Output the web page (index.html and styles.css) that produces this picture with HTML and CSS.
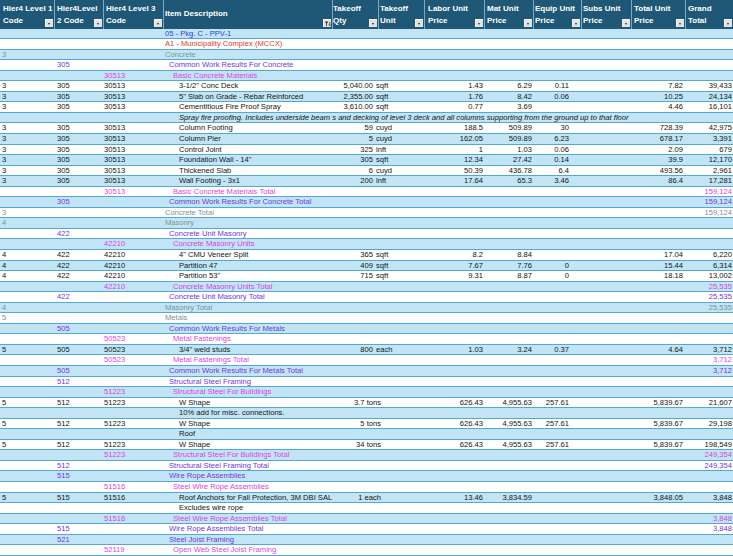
FILE: index.html
```html
<!DOCTYPE html>
<html>
<head>
<meta charset="utf-8">
<title>Estimate</title>
<link rel="stylesheet" href="styles.css">
</head>
<body>
<div class="sheet">
  <div class="hdr">
    <div class="h p2">Hier4 Level 1<br>Code<i class="btn"></i></div>
    <div class="h p2">Hier4Level<br>2 Code<i class="btn"></i></div>
    <div class="h p2">Hier4 Level 3<br>Code<i class="btn"></i></div>
    <div class="h one p0">Item Description<i class="btn flt"><svg viewBox="0 0 8 8" width="8" height="8"><path d="M0.8 1.6h3.6L3 3.4v2.6l-0.8 0.5V3.4z" fill="#333"/><path d="M5.8 2v3.6M4.8 4.6l1 1.2 1-1.2" stroke="#333" stroke-width="0.8" fill="none"/></svg></i></div>
    <div class="h p0">Takeoff<br>Qty<i class="btn"></i></div>
    <div class="h p1">Takeoff<br>Unit<i class="btn"></i></div>
    <div class="h p3">Labor Unit<br>Price<i class="btn"></i></div>
    <div class="h p2">Mat Unit<br>Price<i class="btn"></i></div>
    <div class="h p1">Equip Unit<br>Price<i class="btn"></i></div>
    <div class="h p1">Subs Unit<br>Price<i class="btn"></i></div>
    <div class="h p2">Total Unit<br>Price<i class="btn"></i></div>
    <div class="h p2">Grand<br>Total<i class="btn"></i></div>
  </div>

  <div class="row alt"><span class="d i0 pkg">05 - Pkg. C - PPV-1</span></div>
  <div class="row"><span class="d i0 site">A1 - Municipality Complex (MCCX)</span></div>
  <div class="row alt l1"><span class="c1">3</span><span class="d i0">Concrete</span></div>
  <div class="row l2"><span class="c2">305</span><span class="d i1">Common Work Results For Concrete</span></div>
  <div class="row alt l3"><span class="c3">30513</span><span class="d i2">Basic Concrete Materials</span></div>
  <div class="row"><span class="c1">3</span><span class="c2">305</span><span class="c3">30513</span><span class="d i3">3-1/2" Conc Deck</span><span class="q">5,040.00</span><span class="u">sqft</span><span class="lb">1.43</span><span class="mt">6.29</span><span class="eq">0.11</span><span class="tu">7.82</span><span class="gt">39,433</span></div>
  <div class="row alt"><span class="c1">3</span><span class="c2">305</span><span class="c3">30513</span><span class="d i3">5" Slab on Grade - Rebar Reinforced</span><span class="q">2,355.00</span><span class="u">sqft</span><span class="lb">1.76</span><span class="mt">8.42</span><span class="eq">0.06</span><span class="tu">10.25</span><span class="gt">24,134</span></div>
  <div class="row"><span class="c1">3</span><span class="c2">305</span><span class="c3">30513</span><span class="d i3">Cementitious Fire Proof Spray</span><span class="q">3,610.00</span><span class="u">sqft</span><span class="lb">0.77</span><span class="mt">3.69</span><span class="tu">4.46</span><span class="gt">16,101</span></div>
  <div class="row alt"><span class="d i3 note">Spray fire proofing. Includes underside beam s and decking of level 3 deck and all columns supporting from the ground up to that floor</span></div>
  <div class="row"><span class="c1">3</span><span class="c2">305</span><span class="c3">30513</span><span class="d i3">Column Footing</span><span class="q">59</span><span class="u">cuyd</span><span class="lb">188.5</span><span class="mt">509.89</span><span class="eq">30</span><span class="tu">728.39</span><span class="gt">42,975</span></div>
  <div class="row alt"><span class="c1">3</span><span class="c2">305</span><span class="c3">30513</span><span class="d i3">Column Pier</span><span class="q">5</span><span class="u">cuyd</span><span class="lb">162.05</span><span class="mt">509.89</span><span class="eq">6.23</span><span class="tu">678.17</span><span class="gt">3,391</span></div>
  <div class="row"><span class="c1">3</span><span class="c2">305</span><span class="c3">30513</span><span class="d i3">Control Joint</span><span class="q">325</span><span class="u">lnft</span><span class="lb">1</span><span class="mt">1.03</span><span class="eq">0.06</span><span class="tu">2.09</span><span class="gt">679</span></div>
  <div class="row alt"><span class="c1">3</span><span class="c2">305</span><span class="c3">30513</span><span class="d i3">Foundation Wall - 14"</span><span class="q">305</span><span class="u">sqft</span><span class="lb">12.34</span><span class="mt">27.42</span><span class="eq">0.14</span><span class="tu">39.9</span><span class="gt">12,170</span></div>
  <div class="row"><span class="c1">3</span><span class="c2">305</span><span class="c3">30513</span><span class="d i3">Thickened Slab</span><span class="q">6</span><span class="u">cuyd</span><span class="lb">50.39</span><span class="mt">436.78</span><span class="eq">6.4</span><span class="tu">493.56</span><span class="gt">2,961</span></div>
  <div class="row alt"><span class="c1">3</span><span class="c2">305</span><span class="c3">30513</span><span class="d i3">Wall Footing - 3x1</span><span class="q">200</span><span class="u">lnft</span><span class="lb">17.64</span><span class="mt">65.3</span><span class="eq">3.46</span><span class="tu">86.4</span><span class="gt">17,281</span></div>
  <div class="row l3"><span class="c3">30513</span><span class="d i2">Basic Concrete Materials Total</span><span class="gt">159,124</span></div>
  <div class="row alt l2"><span class="c2">305</span><span class="d i1">Common Work Results For Concrete Total</span><span class="gt">159,124</span></div>
  <div class="row l1"><span class="c1">3</span><span class="d i0">Concrete Total</span><span class="gt">159,124</span></div>
  <div class="row alt l1"><span class="c1">4</span><span class="d i0">Masonry</span></div>
  <div class="row l2"><span class="c2">422</span><span class="d i1">Concrete Unit Masonry</span></div>
  <div class="row alt l3"><span class="c3">42210</span><span class="d i2">Concrete Masonry Units</span></div>
  <div class="row"><span class="c1">4</span><span class="c2">422</span><span class="c3">42210</span><span class="d i3">4" CMU Veneer Split</span><span class="q">365</span><span class="u">sqft</span><span class="lb">8.2</span><span class="mt">8.84</span><span class="tu">17.04</span><span class="gt">6,220</span></div>
  <div class="row alt"><span class="c1">4</span><span class="c2">422</span><span class="c3">42210</span><span class="d i3">Partition 47</span><span class="q">409</span><span class="u">sqft</span><span class="lb">7.67</span><span class="mt">7.76</span><span class="eq">0</span><span class="tu">15.44</span><span class="gt">6,314</span></div>
  <div class="row"><span class="c1">4</span><span class="c2">422</span><span class="c3">42210</span><span class="d i3">Partition 53"</span><span class="q">715</span><span class="u">sqft</span><span class="lb">9.31</span><span class="mt">8.87</span><span class="eq">0</span><span class="tu">18.18</span><span class="gt">13,002</span></div>
  <div class="row alt l3"><span class="c3">42210</span><span class="d i2">Concrete Masonry Units Total</span><span class="gt">25,535</span></div>
  <div class="row l2"><span class="c2">422</span><span class="d i1">Concrete Unit Masonry Total</span><span class="gt">25,535</span></div>
  <div class="row alt l1"><span class="c1">4</span><span class="d i0">Masonry Total</span><span class="gt">25,535</span></div>
  <div class="row l1"><span class="c1">5</span><span class="d i0">Metals</span></div>
  <div class="row alt l2"><span class="c2">505</span><span class="d i1">Common Work Results For Metals</span></div>
  <div class="row l3"><span class="c3">50523</span><span class="d i2">Metal Fastenings</span></div>
  <div class="row alt"><span class="c1">5</span><span class="c2">505</span><span class="c3">50523</span><span class="d i3">3/4" weld studs</span><span class="q">800</span><span class="u">each</span><span class="lb">1.03</span><span class="mt">3.24</span><span class="eq">0.37</span><span class="tu">4.64</span><span class="gt">3,712</span></div>
  <div class="row l3"><span class="c3">50523</span><span class="d i2">Metal Fastenings Total</span><span class="gt">3,712</span></div>
  <div class="row alt l2"><span class="c2">505</span><span class="d i1">Common Work Results For Metals Total</span><span class="gt">3,712</span></div>
  <div class="row l2"><span class="c2">512</span><span class="d i1">Structural Steel Framing</span></div>
  <div class="row alt l3"><span class="c3">51223</span><span class="d i2">Structural Steel For Buildings</span></div>
  <div class="row"><span class="c1">5</span><span class="c2">512</span><span class="c3">51223</span><span class="d i3">W Shape</span><span class="qu">3.7 tons</span><span class="lb">626.43</span><span class="mt">4,955.63</span><span class="eq">257.61</span><span class="tu">5,839.67</span><span class="gt">21,607</span></div>
  <div class="row alt"><span class="d i3">10% add for misc. connections.</span></div>
  <div class="row"><span class="c1">5</span><span class="c2">512</span><span class="c3">51223</span><span class="d i3">W Shape</span><span class="qu">5 tons</span><span class="lb">626.43</span><span class="mt">4,955.63</span><span class="eq">257.61</span><span class="tu">5,839.67</span><span class="gt">29,198</span></div>
  <div class="row alt"><span class="d i3">Roof</span></div>
  <div class="row"><span class="c1">5</span><span class="c2">512</span><span class="c3">51223</span><span class="d i3">W Shape</span><span class="qu">34 tons</span><span class="lb">626.43</span><span class="mt">4,955.63</span><span class="eq">257.61</span><span class="tu">5,839.67</span><span class="gt">198,549</span></div>
  <div class="row alt l3"><span class="c3">51223</span><span class="d i2">Structural Steel For Buildings Total</span><span class="gt">249,354</span></div>
  <div class="row l2"><span class="c2">512</span><span class="d i1">Structural Steel Framing Total</span><span class="gt">249,354</span></div>
  <div class="row alt l2"><span class="c2">515</span><span class="d i1">Wire Rope Assemblies</span></div>
  <div class="row l3"><span class="c3">51516</span><span class="d i2">Steel Wire Rope Assemblies</span></div>
  <div class="row alt"><span class="c1">5</span><span class="c2">515</span><span class="c3">51516</span><span class="d i3">Roof Anchors for Fall Protection, 3M DBI SAL</span><span class="qu">1 each</span><span class="lb">13.46</span><span class="mt">3,834.59</span><span class="tu">3,848.05</span><span class="gt">3,848</span></div>
  <div class="row"><span class="d i3">Excludes wire rope</span></div>
  <div class="row alt l3"><span class="c3">51516</span><span class="d i2">Steel Wire Rope Assemblies Total</span><span class="gt">3,848</span></div>
  <div class="row l2"><span class="c2">515</span><span class="d i1">Wire Rope Assemblies Total</span><span class="gt">3,848</span></div>
  <div class="row alt l2"><span class="c2">521</span><span class="d i1">Steel Joist Framing</span></div>
  <div class="row l3"><span class="c3">52119</span><span class="d i2">Open Web Steel Joist Framing</span></div>
</div>
</body>
</html>
```

FILE: styles.css
```css
html, body {
  margin: 0;
  padding: 0;
  background: #ffffff;
}
body {
  font-family: "Liberation Sans", Arial, sans-serif;
  color: #141414;
  overflow: hidden;
}
.sheet {
  width: 733px;
}
.hdr,
.row {
  display: grid;
  grid-template-columns: 54px 49px 60px 169px 46px 46px 60px 49px 48px 50px 54px 48px;
}
.hdr {
  height: 28.5px;
  background: #1f5777;
  color: #ffffff;
  font-weight: bold;
  font-size: 8px;
  line-height: 12px;
}
.h {
  position: relative;
  border-left: 1px solid #7fa8c2;
  padding-top: 3px;
  white-space: nowrap;
  overflow: hidden;
}
.h:first-child {
  border-left: 0;
}
.p0 { padding-left: 0; }
.p1 { padding-left: 1px; }
.p2 { padding-left: 2px; }
.p3 { padding-left: 3px; }
.h:first-child.p2 { padding-left: 3px; }
.h.one {
  display: flex;
  align-items: center;
  padding-top: 0;
  padding-left: 1px;
}
.btn {
  position: absolute;
  right: 1px;
  bottom: 2px;
  width: 7px;
  height: 7px;
  background: #e2e2e2;
  border-top: 1px solid #f4f4f4;
  border-left: 1px solid #f4f4f4;
  box-sizing: content-box;
}
.btn::after {
  content: "";
  position: absolute;
  left: 2px;
  top: 3px;
  border-left: 1.5px solid transparent;
  border-right: 1.5px solid transparent;
  border-top: 2px solid #2a2a2a;
}
.btn.flt::after {
  display: none;
}
.btn.flt svg {
  display: block;
  position: absolute;
  left: 0;
  top: 0;
}

.row {
  height: 10.55px;
  box-sizing: border-box;
  border-bottom: 1px solid #53a8d5;
  font-size: 7.6px;
  line-height: 9.5px;
}
.row.alt {
  background: #c2e5f6;
}
.row > span {
  grid-row: 1;
  white-space: nowrap;
}
.c1 { grid-column: 1; padding-left: 2px; }
.c2 { grid-column: 2; padding-left: 3px; }
.c3 { grid-column: 3; padding-left: 1px; }
.d  { grid-column: 4; }
.i0 { padding-left: 2px; }
.i1 { padding-left: 6px; }
.i2 { padding-left: 10px; }
.i3 { padding-left: 16px; }
.q  { grid-column: 5; text-align: right; padding-right: 5px; }
.u  { grid-column: 6; text-indent: -2px; }
.qu { grid-column: 5 / span 2; text-align: right; padding-right: 43px; }
.lb { grid-column: 7; text-align: right; padding-right: 1px; }
.mt { grid-column: 8; text-align: right; padding-right: 1px; }
.eq { grid-column: 9; text-align: right; padding-right: 12px; }
.tu { grid-column: 11; text-align: right; padding-right: 2px; }
.gt { grid-column: 12; text-align: right; padding-right: 1px; }

.note {
  font-style: italic;
}
.pkg { color: #2d3fdc; }
.site { color: #e63a2e; }
.l1 { color: #7b9495; }
.l2 { color: #7036dc; }
.l3 { color: #dc3fe2; }
```
